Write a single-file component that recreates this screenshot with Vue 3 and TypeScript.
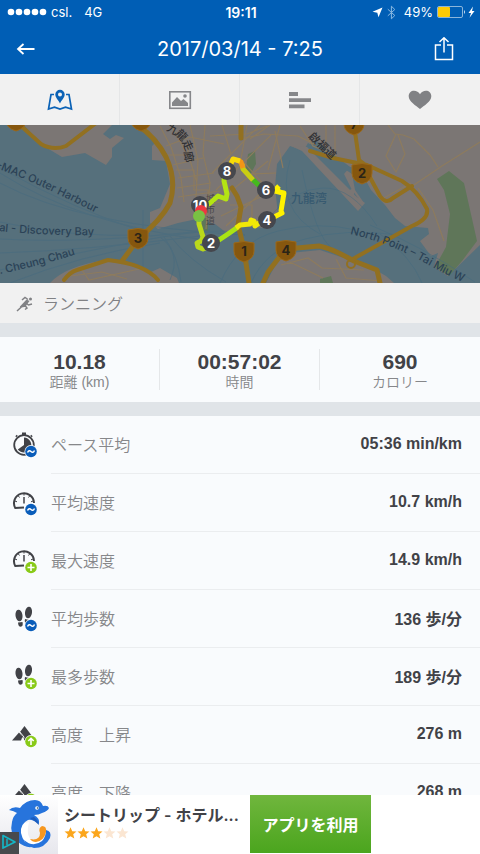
<script setup lang="ts">
interface Metric {
  icon: 'watch' | 'gauge' | 'steps' | 'peak'
  badge: 'avg' | 'plus' | 'up' | 'down'
  label: string
  value: string
}

interface Point {
  x: number
  y: number
  text: string
}

const metrics: Metric[] = [
  { icon: 'watch', badge: 'avg', label: 'ペース平均', value: '05:36 min/km' },
  { icon: 'gauge', badge: 'avg', label: '平均速度', value: '10.7 km/h' },
  { icon: 'gauge', badge: 'plus', label: '最大速度', value: '14.9 km/h' },
  { icon: 'steps', badge: 'avg', label: '平均歩数', value: '136 歩/分' },
  { icon: 'steps', badge: 'plus', label: '最多歩数', value: '189 歩/分' },
  { icon: 'peak', badge: 'up', label: '高度　上昇', value: '276 m' },
  { icon: 'peak', badge: 'down', label: '高度　下降', value: '268 m' },
]

const totals = [
  { value: '10.18', label: '距離 (km)' },
  { value: '00:57:02', label: '時間' },
  { value: '690', label: 'カロリー' },
]

const shields: Point[] = [
  { x: 138, y: 238, text: '3' },
  { x: 362, y: 173, text: '2' },
  { x: 244, y: 251, text: '1' },
  { x: 286, y: 250, text: '4' },
  { x: 354, y: 124, text: '7' },
  { x: 141, y: 120, text: '' },
  { x: 16, y: 120, text: '' },
]

const marks: Point[] = [
  { x: 227, y: 171, text: '8' },
  { x: 266, y: 190, text: '6' },
  { x: 267, y: 220, text: '4' },
  { x: 211, y: 243, text: '2' },
  { x: 200, y: 205, text: '10' },
]

const stars = [true, true, true, false, false]
</script>

<template>
  <div class="app">
    <header class="top">
      <div class="status">
        <div class="status-side">
          <svg width="40" height="8" viewBox="0 0 40 8" fill="#fff" aria-hidden="true">
            <circle v-for="n in 5" :key="n" :cx="n * 8 - 4" cy="4" r="3.300" />
          </svg>
          <span>csl.</span>
          <span class="network">4G</span>
        </div>
        <span class="clock">19:11</span>
        <div class="status-side status-right">
          <svg width="11" height="11" viewBox="0 0 11 11" aria-hidden="true">
            <path d="M10.5 .5 6.5 10.2 5.3 5.7.5 4.7z" fill="#fff" />
          </svg>
          <svg width="9" height="15" viewBox="0 0 9 15" aria-hidden="true">
            <path d="M.8 4.2 7.8 10.5 4.4 13.8V1.2L7.8 4.5.8 10.8" fill="none" stroke="#8ab9e2" />
          </svg>
          <span class="charge">49%</span>
          <svg width="38" height="12" viewBox="0 0 38 12" aria-hidden="true">
            <rect x=".5" y=".5" width="25" height="11" rx="1.5" fill="none" stroke="#8bb5db" />
            <rect x="1" y="1" width="12" height="10" rx="1" fill="#fecb05" />
            <path d="M27 4q2 2 0 4z" fill="#cfe2f3" />
            <path d="M36 .5 31.500 7H34l-1.500 4.800L37.500 5H35z" fill="#fff" />
          </svg>
        </div>
      </div>
      <div class="bar">
        <button class="bar-button" type="button" aria-label="戻る">
          <svg width="20" height="14" viewBox="0 0 20 14" aria-hidden="true">
            <path d="M18.500 7H2M7.500 2 2 7l5.500 5" fill="none" stroke="#fff" stroke-width="1.800" />
          </svg>
        </button>
        <h1>2017/03/14 - 7:25</h1>
        <button class="bar-button bar-share" type="button" aria-label="共有">
          <svg width="20" height="25" viewBox="0 0 20 25" fill="none" stroke="#fff" stroke-width="1.500" aria-hidden="true">
            <path d="M7 8H1.500v14.500h17V8H13M10 15.500V1M5.500 5 10 .8 14.500 5" />
          </svg>
        </button>
      </div>
    </header>

    <nav class="tabs">
      <button type="button" aria-label="地図">
        <svg width="26" height="22" viewBox="0 0 26 22" aria-hidden="true">
          <path d="M7 5.500H4L1.500 20l6-1.800 5.500 1.800 5.500-1.800 6 1.800L22 5.500h-3" fill="none" stroke="#0b62b6" stroke-width="1.700" />
          <path fill-rule="evenodd" d="M13 .8a4.700 4.700 0 0 0-4.700 4.700c0 3 3.200 5.700 4.700 9 1.500-3.300 4.700-6 4.700-9A4.700 4.700 0 0 0 13 .8zm0 2.700a2 2 0 1 1 0 4 2 2 0 0 1 0-4z" fill="#0b62b6" />
        </svg>
      </button>
      <button type="button" aria-label="写真">
        <svg width="24" height="20" viewBox="0 0 24 20" aria-hidden="true">
          <rect x="1.800" y="1.800" width="20.500" height="16.500" fill="none" stroke="#86878a" stroke-width="1.600" />
          <path d="M4 16v-3.500L9 7l4 4 2.500-2L20 13v3z" fill="#86878a" />
          <circle cx="17" cy="6" r="1.800" fill="#86878a" />
        </svg>
      </button>
      <button type="button" aria-label="統計">
        <svg width="22" height="18" viewBox="0 0 22 18" fill="#86878a" aria-hidden="true">
          <path d="M0 1h9v4H0zM0 7.300h22v3.700H0zM0 13.500h15.500v3.800H0z" />
        </svg>
      </button>
      <button type="button" aria-label="お気に入り">
        <svg width="24" height="20" viewBox="0 0 24 20" aria-hidden="true">
          <path d="M12 19C8 15.800.7 11.500.7 6.300.7 2.800 3.200.8 6 .8c2.500 0 4.800 1.200 6 3.500C13.200 2 15.500.8 18 .8c2.800 0 5.300 2 5.300 5.500C23.300 11.500 16 15.800 12 19z" fill="#808184" />
        </svg>
      </button>
    </nav>

    <main class="content">
      <svg class="map" viewBox="0 125 480 158" preserveAspectRatio="xMidYMid slice" role="img" aria-label="ルート地図">
        <defs>
          <path id="harbour" d="M-4 168Q40 184 96 213" />
          <path id="north" d="M350 234Q390 243 425 263T485 290" />
          <path id="cheung" d="M0 274Q40 266 80 253" />
          <path id="bay" d="M-1 231Q45 236 100 235" />
        </defs>
        <rect y="125" width="480" height="158" fill="#56707c" />
        <g fill="#7b7674">
          <path d="M24 125 42 145 62 157 85 153 106 165 112 157 112 148 124 138 116 135 110 139 103 134 112 125z" />
          <path d="M140 125 158 140 152 146V160L166 161 170 184 160 208 150 212V223L158 229 178 223 197 219 215 224 228 234 243 226 264 228 278 215 275 187 277 164 290 146 303 150 358 210 364 203 355 190 352 174 309 145 315 140 350 167 358 166 371 190 385 205 395 218 405 226 428 228 429 234 420 241 431 256 438 253 434 267 448 276 480 245V125z" />
          <path d="M50 283Q65 266 110 259 135 262 151 272L160 268 177 278 179 283z" />
          <path d="M266 283 278 260 290 253 320 250 341 257 362 262 386 276 394 283z" />
        </g>
        <g fill="#5f7659">
          <path d="M437 179 449 171 464 183 477 241 462 261 449 276 435 267 446 247 450 214 444 190z" />
          <path d="M248 154 255 151 256 164 250 175 246 168zM320 279 331 276 333 283 320 283z" />
          <path d="M202 218h6v13h-6z" />
        </g>
        <path d="M308 143 350 167 344 174 352 190 359 199 304 150z" fill="#56707c" />
        <path d="M291 146 302 151 358 211 365 203 354 195 354 187 350 190 307 147z" fill="#7b7674" />
        <g fill="none" stroke="#466b80" stroke-width="1" opacity=".55">
          <path d="M0 168Q75 210 150 234M0 173Q80 224 205 240M0 183Q80 226 245 235M0 222Q70 238 150 235M0 239Q90 244 210 230M0 253Q90 250 200 236M0 270Q65 255 145 240T245 235M10 283Q80 255 160 243M143 210V270" />
          <path d="M160 237Q182 253 170 280M164 237Q178 256 181 282M170 236Q188 260 226 282M220 283Q238 241 278 231T356 230M251 283Q265 250 305 239T400 235M270 216Q294 189 323 188T377 226M290 160Q275 210 320 234M302 170Q316 238 332 248M370 225Q420 245 475 282M380 234Q411 256 422 283" />
        </g>
        <g fill="none" stroke="#8d7b5e" stroke-width="1.200">
          <path d="M160 126 171 147 181 178 184 202M171 125 190 160 197 183M190 125 198 160 195 214M205 125 203 154 210 183 206 229M166 146 190 137 224 144M173 165 203 158M178 178 214 173M177 188 211 183M178 197 220 191M190 208 226 201M176 170h18v20h14v16M166 155h22v-12M212 173 260 125M216 190 271 135M220 200 268 161M221 216 275 190M226 226 266 188M230 205h22v20M222 125 231 154M247 125 241 159 265 186M210 136 247 134 267 126M250 139 270 125M280 125 268 170M252 174 276 173" />
          <path d="M240 139 264 134 298 136 316 145M275 131 283 168M326 125V151M335 125V155M300 126 313 146 337 156M388 125 395 134 403 135 414 139 430 155 438 167M396 134 386 156 396 172 405 154 398 135M480 142 442 166 411 187M369 170 382 199 411 183M418 188 433 210 444 241M336 259 346 278 382 281M281 265 308 258 322 268 364 270M290 262 323 278M70 276 102 272 127 279M82 270 89 280 139 269" />
        </g>
        <g fill="none" stroke="#927020" stroke-linejoin="round" stroke-linecap="round">
          <path d="M137 125Q155 136 166 157 177 180 170 203 161 220 139 238L122 261" stroke-width="5" />
          <path d="M20 125 41 144Q53 151 66 146L96 123M64 280Q70 272 77 270L108 260Q145 264 158 280" stroke-width="4" />
          <path d="M354 125 359 160 371 169M310 151 333 158 367 165 402 181Q418 191 427 209 429 219 412 226L351 260M366 170 380 196Q386 205 393 198L412 186" stroke-width="4" />
          <path d="M284 251 268 272 263 283M286 249 319 246Q331 248 354 261L377 270 380 283" stroke-width="5" />
          <path d="M244 249 238 225 241 207 237 196 232 188M241 125V138M244 250 249 283" stroke-width="5" />
          <circle cx="351" cy="264" r="4" stroke-width="2" />
        </g>
        <g class="places">
          <text><textPath href="#harbour">-MAC Outer Harbour</textPath></text>
          <text><textPath href="#bay">al - Discovery Bay</textPath></text>
          <text><textPath href="#cheung">. Cheung Chau</textPath></text>
          <text><textPath href="#north">North Point – Tai Miu W</textPath></text>
          <text class="bay-name" x="291" y="203">九龍湾</text>
        </g>
        <g class="streets">
          <text transform="translate(166 130) rotate(28)">九</text>
          <text transform="translate(175 134) rotate(46)">龍</text>
          <text transform="translate(182 142) rotate(66)">走</text>
          <text transform="translate(184 152) rotate(80)">廊</text>
          <text transform="translate(308 137) rotate(44)">啟福道</text>
        </g>
        <g class="lanes">
          <text x="206" y="202">城</text>
          <text x="206" y="213">市</text>
          <text x="206" y="224">道</text>
        </g>
        <g v-for="(s, i) in shields" :key="'s' + i" :transform="`translate(${s.x} ${s.y})`">
          <path d="M-10-8Q0-11 10-8V0Q10 8 0 11-10 8-10 0z" fill="#86570e" stroke="#9a681a" />
          <text class="shield-text" text-anchor="middle" y="5">{{ s.text }}</text>
        </g>
        <g fill="none" stroke-width="5" stroke-linejoin="round">
          <path d="M199 217 199 224 203 237 201 241 197 243 198 247 203 249 210 246" stroke="#bad91b" />
          <path d="M213 244 228 234 238 227" stroke="#a9e414" />
          <path d="M236 228 240 225 250 224 251 220 254 221 255 226 263 220" stroke="#f0e807" />
          <path d="M270 219 282 213 281 211 284 193 279 192 277 188 279 186M283 193 275 191 269 190" stroke="#fff200" />
          <path d="M265 191 251 178" stroke="#45b91e" />
          <path d="M253 180 243 169 242 164" stroke="#c9cd12" />
          <path d="M243 168 241 162 237 160" stroke="#f39517" />
          <path d="M240 161 233 159 230 166" stroke="#f9db08" />
          <path d="M225 173 224 181 227 194 226 199 218 196 209 204 203 206" stroke="#b4e513" />
        </g>
        <g v-for="m in marks" :key="m.text" :transform="`translate(${m.x} ${m.y})`">
          <circle r="9" fill="#45474d" />
          <text class="mark-text" text-anchor="middle" y="5">{{ m.text }}</text>
        </g>
        <circle cx="201" cy="211" r="6" fill="#ed3840" />
        <circle cx="199" cy="216" r="6" fill="#79c143" />
      </svg>

      <section class="activity">
        <svg width="17" height="17" viewBox="0 0 17 17" aria-hidden="true">
          <path d="M1 16 6.500 11M6 5 9 2.500l3 2M4 12l5.500-1 1.500 2-2 1.500M10.500 8.500l2 1.500 3.500-1" fill="none" stroke="#808184" stroke-width="1.500" />
          <path d="m4 11.500 6.500-7 3 1.500-4 5.500z" fill="#808184" />
          <circle cx="14.500" cy="4" r="1.500" fill="#808184" />
        </svg>
        <h2>ランニング</h2>
      </section>

      <dl class="totals">
        <div v-for="t in totals" :key="t.label" class="total">
          <dt>{{ t.label }}</dt>
          <dd>{{ t.value }}</dd>
        </div>
      </dl>

      <dl class="metrics">
        <div v-for="m in metrics" :key="m.label" class="metric">
          <svg width="28" height="28" viewBox="0 0 28 28" aria-hidden="true">
            <g v-if="m.icon === 'watch'">
              <circle cx="12" cy="14" r="9.800" fill="none" stroke="#414247" stroke-width="1.800" />
              <path d="M12 6.500V14L5.800 18.500A7.500 7.500 0 1 0 12 6.500z" fill="#414247" />
              <path d="M11 2.500h2v1.500h-2zM4 4.500l1 1M19 5.500l1-1" stroke="#414247" stroke-width="2" fill="#414247" />
            </g>
            <g v-else-if="m.icon === 'gauge'" fill="none" stroke="#414247">
              <path d="M3.500 19.500A10 10 0 1 1 22 14M3 19l9-.5" stroke-width="2" />
              <path d="M12 8v6.500" stroke-width="1.500" />
              <path d="M12 4v2.500M6 6.500l1.500 2M18 6.500l-1.500 2M3 12l2 .8M21 12l-2 .8" stroke-width="1" />
            </g>
            <g v-else-if="m.icon === 'steps'" fill="#414247">
              <ellipse cx="7" cy="10.500" rx="3.500" ry="5.800" transform="rotate(-8 7 10.500)" />
              <ellipse cx="16.500" cy="7.500" rx="3.500" ry="5.800" transform="rotate(8 16.500 7.500)" />
              <path d="M6 17.500l4.500-.5q1 4.500-1.800 4.700-2.500 0-2.700-4.200zM13 14l4 1-2 4q-3-1-2-5z" />
            </g>
            <g v-else fill="#414247">
              <path d="M0 19.500 7 11.500l3.500 4-1.500 4z" />
              <path d="M8 11 12.500 5 20 15l-8 4.500z" />
              <path d="m7 10 5 6-1 5" fill="none" stroke="#f9fbfd" stroke-width="1" />
            </g>
            <circle cx="19" cy="20.500" r="6.500" fill="#f9fbfd" />
            <circle cx="19" cy="20.500" r="5.800" :fill="m.badge === 'avg' ? '#0a5dba' : '#89ca18'" />
            <path v-if="m.badge === 'avg'" d="M15.500 21.500q1.500-3 3.500-1t3.500-1" fill="none" stroke="#fff" stroke-width="1.500" />
            <path v-else-if="m.badge === 'plus'" d="M15.500 20.500h7M19 17v7" stroke="#fff" stroke-width="1.600" />
            <path v-else-if="m.badge === 'up'" d="M19 24v-6.500M16.300 20l2.700-2.700 2.700 2.700" fill="none" stroke="#fff" stroke-width="1.600" />
            <path v-else d="M19 17v6.500M16.300 21l2.700 2.700 2.700-2.700" fill="none" stroke="#fff" stroke-width="1.600" />
          </svg>
          <div class="metric-line">
            <dt>{{ m.label }}</dt>
            <dd>{{ m.value }}</dd>
          </div>
        </div>
      </dl>
    </main>

    <aside class="ad">
      <svg class="ad-logo" width="58" height="59" viewBox="0 0 58 59" aria-hidden="true">
        <defs>
          <linearGradient id="paper" x2="0" y2="1">
            <stop offset="0" stop-color="#fff" />
            <stop offset="1" stop-color="#e7e7ed" />
          </linearGradient>
        </defs>
        <path d="M0 0h58v59H0z" fill="url(#paper)" />
        <path d="M21 29Q18 46 30 52 41 53 44 44L34 46Q25 43 29 27z" fill="#fff" />
        <path d="M9 15Q13 11 20 13 26 5 35 5 41 5 43 11 48 10 49 13 48 16 42 18 39 20 34 20 40 23 39 29 32 24 28 25 20 29 21 38 23 48 32 52 25 53 18 47 9 39 12 27 13 21 17 18 14 16 9 15z" fill="#2774dc" />
        <path d="M30 23Q35 26 39 30 38 25 34 22z" fill="#1c5cbd" />
        <path d="M24 45Q33 53 42 46 46 42 46 35 52 36 50 43 45 53 34 53 26 51 24 45z" fill="#2774dc" />
        <path d="M30 44Q40 46 40 38 38 33 42 31 47 31 46 37 44 46 36 47 32 47 30 44z" fill="#f6971f" />
        <circle cx="37" cy="13" r="1.800" fill="#fff" />
        <circle cx="37.500" cy="13" r=".8" fill="#245" />
        <path d="M0 37h19v22H0z" fill="#484a4d" />
        <path d="M3 40.500 15 47 3 53z" fill="none" stroke="#15b5c5" stroke-width="1.700" stroke-linejoin="round" />
        <path d="M7 44v6" stroke="#15b5c5" stroke-width="1.500" />
      </svg>
      <div class="ad-copy">
        <p>シートリップ - ホテル...</p>
        <div class="stars" role="img" aria-label="評価 3">
          <svg v-for="(on, i) in stars" :key="i" width="13" height="12" viewBox="0 0 13 12" aria-hidden="true">
            <path d="m6.500.2 1.700 4 4.300.3-3.300 2.800 1.100 4.300-3.800-2.300-3.800 2.300 1.100-4.300L.5 4.500l4.300-.3z" :fill="on ? '#fba61c' : '#fbe6d2'" />
          </svg>
        </div>
      </div>
      <a class="ad-link" href="#">アプリを利用</a>
    </aside>
  </div>
</template>

<style>
body {
  margin: 0;
}
</style>

<style scoped>
.app {
  display: flex;
  flex-direction: column;
  height: 100vh;
  overflow: hidden;
  background: #e0e4e8;
  color: #414247;
  font-family: Inter, "Noto Sans CJK JP", sans-serif;
}

h1,
h2,
p,
dl,
dd {
  margin: 0;
}

button {
  padding: 0;
  border: 0;
  background: none;
}

svg {
  display: block;
  flex: none;
}

.top {
  flex: none;
  background: #005eb5;
  color: #fff;
}

.status {
  display: flex;
  align-items: center;
  height: 24px;
  padding: 0 5px 0 7px;
  font-size: 13px;
}

.status-side {
  display: flex;
  flex: 1;
  align-items: center;
  gap: 4px;
}

.network {
  margin-left: 8px;
}

.clock {
  font-size: 14px;
  font-weight: 600;
}

.status-right {
  justify-content: flex-end;
}

.charge {
  margin-left: 4px;
}

.bar {
  display: flex;
  align-items: center;
  justify-content: space-between;
  height: 50px;
  padding: 0 16px;
}

.bar-button {
  display: flex;
  align-items: center;
  width: 40px;
  height: 40px;
}

.bar-share {
  justify-content: center;
}

h1 {
  font-size: 20px;
  font-weight: 400;
}

.tabs {
  display: grid;
  flex: none;
  grid-template-columns: repeat(4, 1fr);
  height: 51px;
  background: #f1f1f1;
}

.tabs button {
  display: flex;
  align-items: center;
  justify-content: center;
}

.tabs button:not(:last-child) {
  border-right: 1px solid #e5e6e7;
}

.content {
  flex: 1;
  min-height: 0;
  overflow-y: auto;
  scrollbar-width: none;
}

.map {
  width: 100%;
  height: 158px;
}

.places {
  fill: #2b4256;
  font-size: 11px;
  font-weight: 500;
}

.bay-name {
  fill: #385a70;
  font-size: 12px;
}

.streets {
  fill: #303033;
  font-size: 11px;
  font-weight: 500;
}

.lanes {
  fill: #47464a;
  font-size: 9px;
}

.shield-text {
  fill: #2b2417;
  font-size: 13px;
  font-weight: 700;
}

.mark-text {
  fill: #fff;
  font-size: 13px;
  font-weight: 700;
}

.activity {
  display: flex;
  align-items: center;
  gap: 10px;
  height: 40px;
  padding: 0 16px;
  background: #f1f1f1;
}

h2 {
  color: #808184;
  font-size: 16px;
  font-weight: 350;
}

.totals {
  display: grid;
  grid-template-columns: repeat(3, 1fr);
  margin: 14px 0;
  padding: 12px 0;
  background: #f9fbfd;
}

.total {
  display: flex;
  flex-direction: column-reverse;
  height: 41px;
  font-family: "Liberation Sans", "Noto Sans CJK JP", sans-serif;
  text-align: center;
}

.total:not(:last-child) {
  border-right: 1px solid #e5e7e9;
}

.total dt {
  color: #86878a;
  font-size: 14px;
  font-weight: 350;
  line-height: 16px;
}

.total dd {
  font-size: 21px;
  font-weight: 600;
  line-height: 25px;
}

.metrics {
  background: #f9fbfd;
}

.metric {
  display: flex;
  align-items: center;
  gap: 11px;
  height: 58px;
  padding-left: 12px;
}

.metric-line {
  display: flex;
  flex: 1;
  align-items: center;
  justify-content: space-between;
  box-sizing: border-box;
  height: 58px;
  padding: 0 18px 2px 0;
  border-bottom: 1px solid #ebedef;
}

.metric dt {
  color: #86878a;
  font-size: 16px;
  font-weight: 350;
}

.metric dd {
  font-family: "Liberation Sans", "Noto Sans CJK JP", sans-serif;
  font-size: 16px;
  font-weight: 600;
}

.ad {
  display: flex;
  flex: none;
  height: 59px;
  background: #fff;
}

.ad-copy {
  width: 176px;
  margin: 0 10px 0 6px;
}

.ad-copy p {
  margin: 8px 0 0;
  font-size: 16px;
  font-weight: 600;
  line-height: 24px;
  white-space: nowrap;
}

.stars {
  display: flex;
}

.ad-link {
  display: flex;
  align-items: center;
  justify-content: center;
  width: 121px;
  height: 58px;
  background: linear-gradient(#70b63d, #4ba51e);
  color: #fff;
  font-size: 16px;
  font-weight: 600;
  text-decoration: none;
}
</style>
